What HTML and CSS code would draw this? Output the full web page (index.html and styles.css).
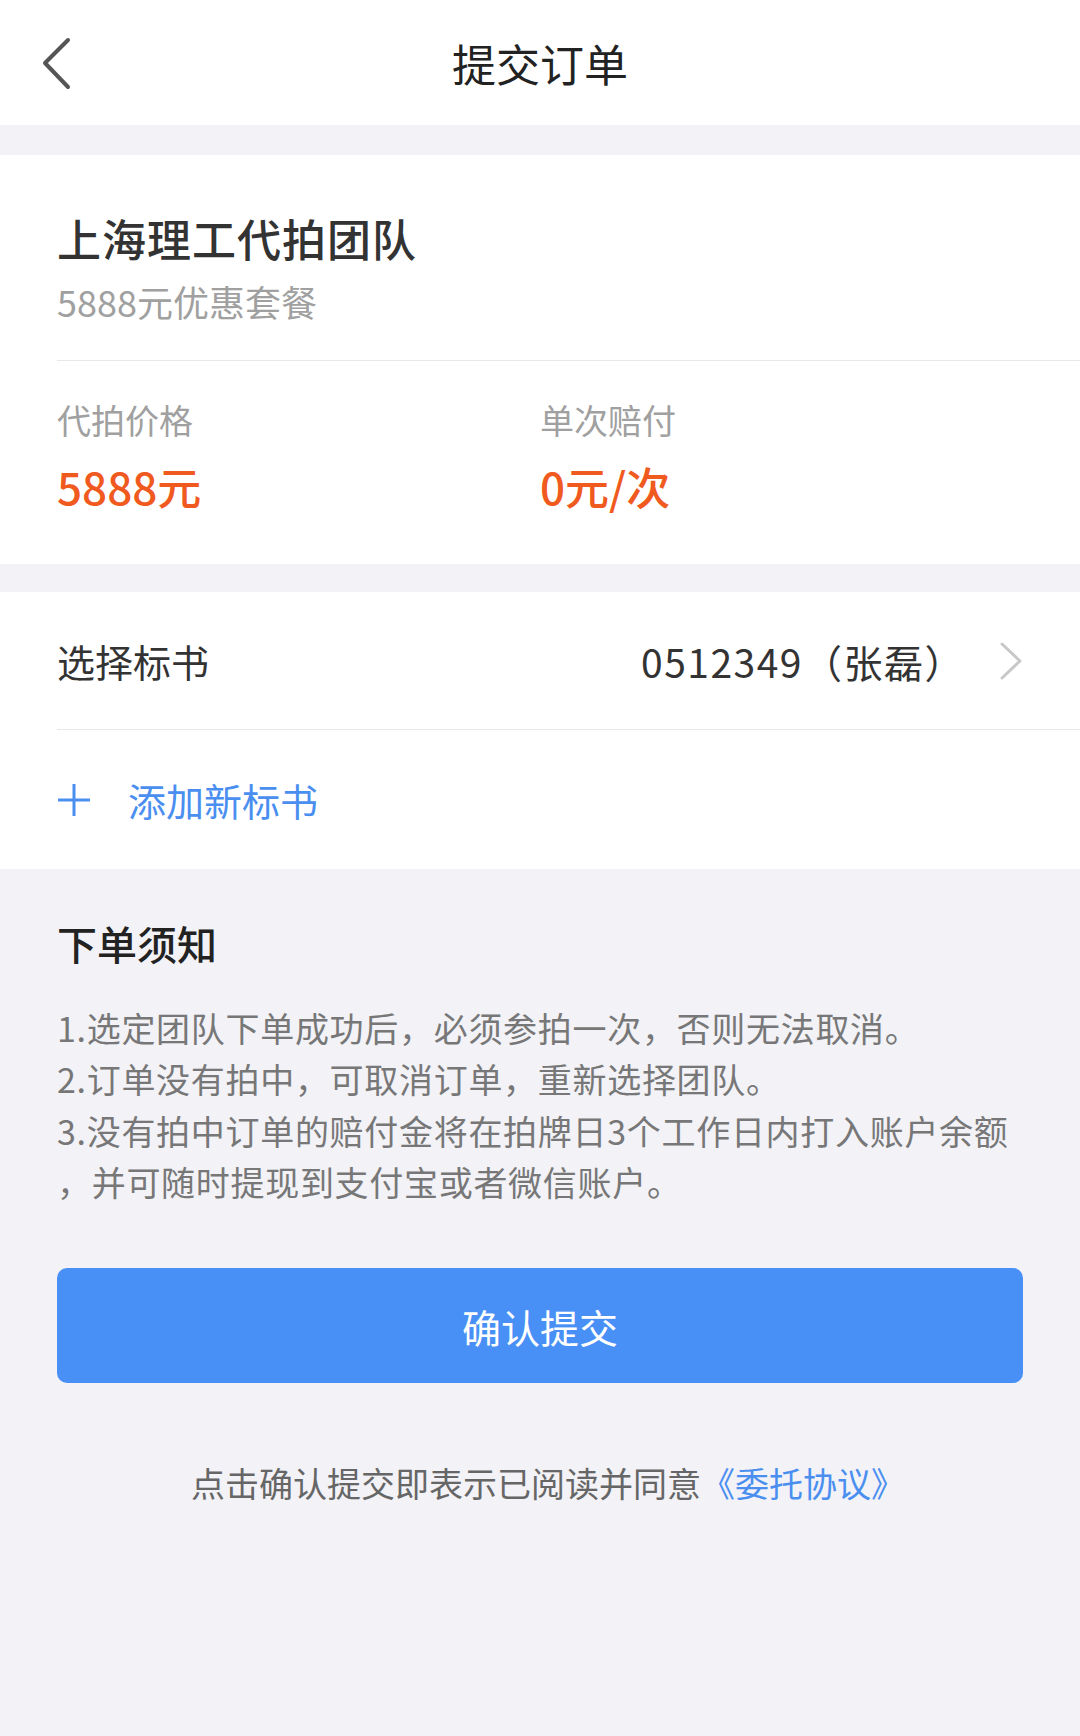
FILE: index.html
```html
<!DOCTYPE html>
<html lang="zh-CN">
<head>
<meta charset="UTF-8">
<meta name="viewport" content="width=device-width, initial-scale=1.0">
<title>提交订单</title>
<link rel="stylesheet" href="styles.css">
</head>
<body>
<div class="page">
    <div class="nav-bar">
        <a class="nav-back" href="#">
            <svg width="40" height="60" viewBox="0 0 40 60">
                <polyline points="26,8 3,31 26,55" fill="none" stroke="#555" stroke-width="4" stroke-linecap="round" stroke-linejoin="round"/>
            </svg>
        </a>
        <h1 class="nav-title">提交订单</h1>
        <span></span>
    </div>

    <div class="card team-card">
        <div class="team-info">
            <div class="team-name">上海理工代拍团队</div>
            <div class="team-plan">5888元优惠套餐</div>
        </div>
        <div class="team-stats">
            <div class="stat">
                <div class="stat-label">代拍价格</div>
                <div class="stat-value">5888元</div>
            </div>
            <div class="stat">
                <div class="stat-label">单次赔付</div>
                <div class="stat-value">0元/次</div>
            </div>
        </div>
    </div>

    <div class="card bid-card">
        <a class="bid-row" href="#">
            <span class="bid-label">选择标书</span>
            <span class="bid-value">0512349（张磊）</span>
            <svg class="bid-arrow" width="24" height="40" viewBox="0 0 24 40">
                <polyline points="3,3 21,20 3,37" fill="none" stroke="#c8c8c8" stroke-width="3" stroke-linecap="round" stroke-linejoin="round"/>
            </svg>
        </a>
        <a class="bid-add" href="#">
            <svg width="34" height="34" viewBox="0 0 34 34">
                <path d="M1 17 H33 M17 1 V33" stroke="#4a8ff0" stroke-width="3"/>
            </svg>
            <span>添加新标书</span>
        </a>
    </div>

    <div class="notice">
        <h3 class="notice-title">下单须知</h3>
        <p class="notice-text">1.选定团队下单成功后，必须参拍一次，否则无法取消。<br>2.订单没有拍中，可取消订单，重新选择团队。<br>3.没有拍中订单的赔付金将在拍牌日3个工作日内打入账户余额<br>，并可随时提现到支付宝或者微信账户。</p>
        <button class="submit-btn">确认提交</button>
        <p class="agreement">点击确认提交即表示已阅读并同意<a href="#">《委托协议》</a></p>
    </div>
</div>
</body>
</html>
```

FILE: styles.css
```css
body {
    margin: 0;
    background-color: #f2f2f7;
    font-family: "Noto Sans CJK SC", "Noto Sans", sans-serif;
    color: #333;
}
a {
    text-decoration: none;
}
.page {
    width: 1080px;
    min-height: 1736px;
}
.nav-bar {
    height: 125px;
    background-color: #fff;
    display: grid;
    grid-template-columns: 1fr auto 1fr;
    align-items: center;
    margin-bottom: 30px;
}
.nav-back {
    display: flex;
    padding-left: 42px;
    padding-bottom: 2px;
}
.nav-title {
    margin: 0;
    font-size: 44px;
    font-weight: 400;
    line-height: 60px;
    color: #222;
}
.card {
    background-color: #fff;
    margin-bottom: 28px;
}
.team-info {
    margin-left: 57px;
    padding: 53px 0 35px;
    border-bottom: 1px solid #e8e8ec;
}
.team-name {
    font-size: 44px;
    line-height: 60px;
    font-weight: 500;
    letter-spacing: 1px;
    color: #333;
}
.team-plan {
    margin-top: 9px;
    font-size: 36px;
    line-height: 48px;
    color: #a0a0a0;
}
.team-stats {
    display: grid;
    grid-template-columns: 483px 1fr;
    padding: 36px 0 50px 57px;
}
.stat-label {
    font-size: 34px;
    line-height: 46px;
    color: #a0a0a0;
}
.stat-value {
    margin-top: 15px;
    font-size: 44px;
    line-height: 56px;
    font-weight: 500;
    color: #f05a1e;
}
.bid-row {
    display: flex;
    align-items: center;
    height: 137px;
    margin-left: 57px;
    padding-right: 57px;
    border-bottom: 1px solid #e8e8ec;
    color: #333;
}
.bid-label {
    flex: 1;
    font-size: 38px;
}
.bid-value {
    font-size: 39px;
    letter-spacing: 1.5px;
    color: #333;
}
.bid-arrow {
    margin-left: 34px;
}
.bid-add {
    display: flex;
    align-items: center;
    height: 139px;
    padding-left: 57px;
    color: #4a8ff0;
    font-size: 38px;
}
.bid-add span {
    margin-left: 37px;
}
.notice {
    margin-top: -28px;
    padding: 47px 57px 0;
}
.notice-title {
    margin: 0;
    font-size: 40px;
    line-height: 54px;
    font-weight: 500;
    color: #222;
}
.notice-text {
    margin: 32px 0 0;
    font-size: 34px;
    line-height: 51.3px;
    letter-spacing: 0.7px;
    color: #777;
}
.submit-btn {
    display: block;
    width: 100%;
    height: 115px;
    margin-top: 61px;
    border: none;
    border-radius: 10px;
    background-color: #4890f6;
    color: #fff;
    font-family: inherit;
    font-size: 39px;
    cursor: pointer;
}
.agreement {
    margin: 77px 0 0;
    padding-left: 16px;
    text-align: center;
    font-size: 34px;
    line-height: 46px;
    color: #666;
}
.agreement a {
    color: #4a8ff0;
}
```
